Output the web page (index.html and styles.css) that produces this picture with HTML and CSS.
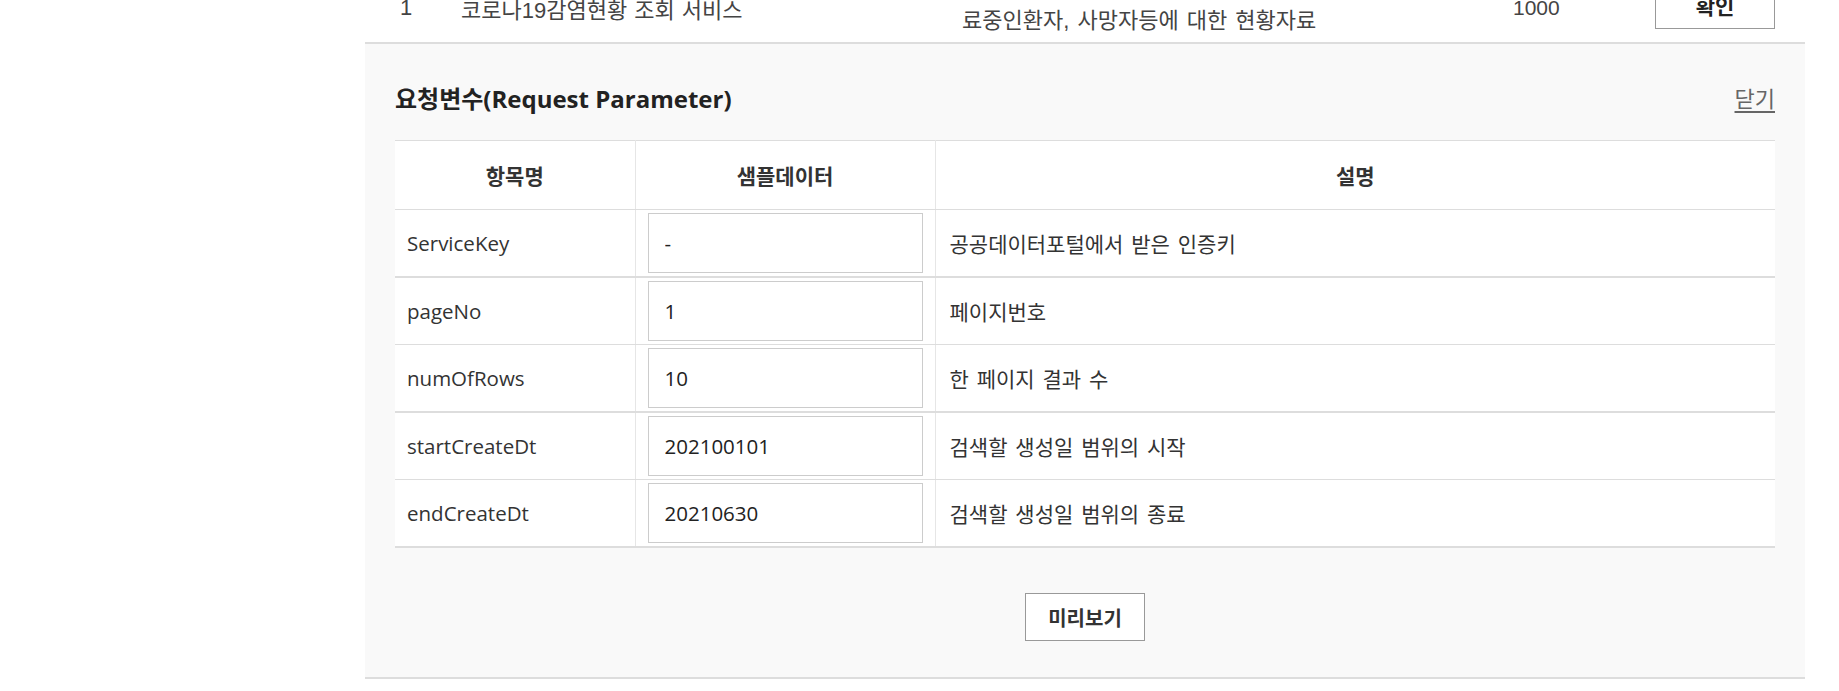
FILE: index.html
```html
<!DOCTYPE html>
<html lang="ko">
<head>
<meta charset="utf-8">
<title>요청변수</title>
<link rel="stylesheet" href="styles.css">
</head>
<body>
<div class="page">
  <div class="list-row">
    <span class="cell-num">1</span>
    <span class="cell-name">코로나19감염현황 조회 서비스</span>
    <span class="cell-desc">코로나19 감염 확진자, 격리해제자, 검사진행자, 치<br>료중인환자, 사망자등에 대한 현황자료</span>
    <span class="cell-count">1000</span>
    <span class="cell-btn"><button class="btn-confirm" type="button">확인</button></span>
  </div>

  <section class="panel">
    <div class="panel-head">
      <h3 class="panel-title">요청변수(Request Parameter)</h3>
      <a class="panel-close" href="#">닫기</a>
    </div>

    <table class="param-table">
      <colgroup>
        <col class="col-name">
        <col class="col-sample">
        <col class="col-desc">
      </colgroup>
      <thead>
        <tr>
          <th>항목명</th>
          <th>샘플데이터</th>
          <th>설명</th>
        </tr>
      </thead>
      <tbody>
        <tr>
          <td class="td-name">ServiceKey</td>
          <td class="td-input"><input class="param-input" type="text" value="-"></td>
          <td class="td-desc">공공데이터포털에서 받은 인증키</td>
        </tr>
        <tr>
          <td class="td-name">pageNo</td>
          <td class="td-input"><input class="param-input" type="text" value="1"></td>
          <td class="td-desc">페이지번호</td>
        </tr>
        <tr>
          <td class="td-name">numOfRows</td>
          <td class="td-input"><input class="param-input" type="text" value="10"></td>
          <td class="td-desc">한 페이지 결과 수</td>
        </tr>
        <tr>
          <td class="td-name">startCreateDt</td>
          <td class="td-input"><input class="param-input" type="text" value="202100101"></td>
          <td class="td-desc">검색할 생성일 범위의 시작</td>
        </tr>
        <tr>
          <td class="td-name">endCreateDt</td>
          <td class="td-input"><input class="param-input" type="text" value="20210630"></td>
          <td class="td-desc">검색할 생성일 범위의 종료</td>
        </tr>
      </tbody>
    </table>

    <div class="actions">
      <button class="btn-preview" type="button">미리보기</button>
    </div>
  </section>
</div>
</body>
</html>
```

FILE: styles.css
```css
html, body {
  margin: 0;
  padding: 0;
  background: #fff;
}

body {
  font-family: "Open Sans", "Noto Sans CJK KR", sans-serif;
  color: #333;
  overflow: hidden;
}

.page {
  margin-left: 365px;
  width: 1440px;
}

/* previous list row (scrolled partly out of view) */
.list-row {
  display: flex;
  align-items: center;
  height: 68px;
  margin-top: -26px;
  padding-left: 35px;
  font-family: "Liberation Sans", "Noto Sans CJK KR", sans-serif;
  font-size: 22px;
  color: #444;
  white-space: nowrap;
}

.cell-num { width: 61px; }
.cell-name { width: 501px; word-spacing: 1px; }
.cell-desc {
  width: 551px;
  line-height: 32px;
  margin-top: -6px;
  word-spacing: 2px;
}
.cell-count { width: 142px; font-size: 21px; }
.cell-btn { width: 120px; }

.btn-confirm {
  display: block;
  width: 120px;
  height: 48px;
  margin-top: -6px;
  border: 1px solid #999;
  background: #fff;
  font-family: "Noto Sans CJK KR", sans-serif;
  font-size: 21px;
  font-weight: 700;
  color: #222;
}

/* request parameter panel */
.panel {
  background: #f9f9f9;
  border-top: 2px solid #ddd;
  border-bottom: 2px solid #ddd;
  padding: 0 30px;
}

.panel-head {
  display: flex;
  justify-content: space-between;
  align-items: center;
  height: 86px;
  padding-top: 10px;
}

.panel-title {
  margin: 0;
  font-size: 24px;
  font-weight: 700;
  color: #222;
}

.panel-close {
  font-family: "Noto Sans CJK KR", sans-serif;
  font-size: 22px;
  color: #666;
  text-decoration: underline;
  text-underline-offset: 4px;
}

.param-table {
  width: 100%;
  border-collapse: collapse;
  background: #fff;
  border-top: 1px solid #ddd;
  font-size: 20.5px;
}

.col-name { width: 240px; }
.col-sample { width: 299px; }

.param-table th {
  height: 68px;
  padding: 0;
  font-family: "Noto Sans CJK KR", sans-serif;
  font-size: 21px;
  font-weight: 700;
  color: #333;
  text-align: center;
  border-bottom: 1px solid #ddd;
  border-left: 1px solid #e6e6e6;
}

.param-table td {
  height: 66px;
  padding: 0;
  color: #333;
  border-left: 1px solid #e6e6e6;
  border-bottom: 1px solid #ddd;
  vertical-align: middle;
}

.param-table tbody tr:nth-child(odd) td {
  border-bottom: 2px solid #ddd;
}

.param-table th:first-child,
.param-table td:first-child {
  border-left: none;
}

.td-name {
  padding-left: 12px !important;
}

.td-input {
  padding: 0 12px !important;
}

.td-desc {
  padding-left: 14px !important;
  font-family: "Noto Sans CJK KR", sans-serif;
  font-size: 21px;
  word-spacing: 2px;
}

.param-input {
  display: block;
  box-sizing: border-box;
  width: 275px;
  height: 60px;
  margin: 0;
  padding: 0 0 0 16px;
  border: 1px solid #ccc;
  background: #fff;
  font-family: "Open Sans", "Noto Sans CJK KR", sans-serif;
  font-size: 20.5px;
  color: #222;
  outline: none;
}

.actions {
  display: flex;
  justify-content: center;
  padding: 45px 0 36px;
}

.btn-preview {
  box-sizing: border-box;
  width: 120px;
  height: 48px;
  border: 1px solid #999;
  background: #fff;
  font-family: "Noto Sans CJK KR", sans-serif;
  font-size: 20px;
  font-weight: 700;
  color: #333;
}
```
